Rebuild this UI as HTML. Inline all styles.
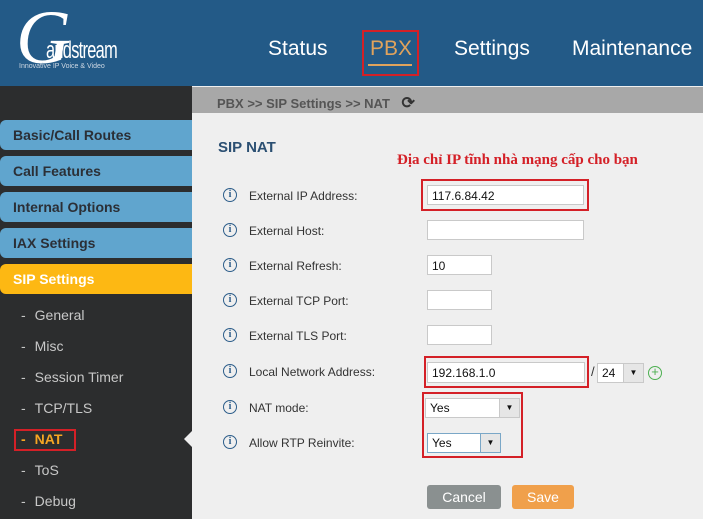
<!DOCTYPE html>
<html><head><meta charset="utf-8"><style>
*{margin:0;padding:0;box-sizing:border-box}
body{width:703px;height:519px;overflow:hidden;font-family:"Liberation Sans",Arial,sans-serif;background:#efefef;position:relative}
.a{position:absolute}
.hdr{left:0;top:0;width:703px;height:86px;background:#235a87}
.nav{color:#fff;font-size:21px;top:37px}
.side{left:0;top:86px;width:192px;height:433px;background:#2c2d2e}
.mi{left:0;width:192px;height:30px;background:#60a5ce;color:#2b2f36;font-weight:bold;font-size:14px;padding:7px 0 0 13px;border-radius:6px 0 0 6px}
.sub{left:21px;color:#c8c8c8;font-size:14px}
.sub span{margin-left:9px}
.lbl{left:249px;font-size:12px;color:#333}
.ic{left:223px;width:14px;height:14px;border:1.5px solid #2c5d8a;border-radius:50%;color:#2c5d8a;font-size:10px;font-weight:bold;text-align:center;line-height:11px;font-family:"Liberation Serif",serif}
.in{background:#fff;border:1px solid #c9c9c9;font-size:12px;padding:3px 4px;color:#111}
.red{border:2.5px solid #d42027}
.sel{background:#fff;border:1px solid #c9c9c9;font-size:12px;padding:2px 4px;color:#111}
.arr{position:absolute;right:0;top:0;bottom:0;width:20px;background:#e6e6e6;border-left:1px solid #c9c9c9;font-size:8px;text-align:center;line-height:17px}
</style></head><body>
<div class="a hdr"></div>
<div class="a" style="left:16px;top:0px;color:#fff;font-family:'Liberation Serif',serif;font-style:italic;font-size:76px;line-height:76px">G</div>
<div class="a" style="left:46px;top:37px;color:#fff;font-size:24px;letter-spacing:-1px;transform:scaleX(.68);transform-origin:left">andstream</div>
<div class="a" style="left:19px;top:63px;color:#cfd9e4;font-size:7px">Innovative IP Voice &amp; Video</div>
<div class="a nav" style="left:268px">Status</div>
<div class="a nav" style="left:370px;color:#e0a35c">PBX</div>
<div class="a" style="left:368px;top:64px;width:44px;height:2px;background:#e0a35c"></div>
<div class="a red" style="left:362px;top:30px;width:57px;height:46px"></div>
<div class="a nav" style="left:454px">Settings</div>
<div class="a nav" style="left:572px">Maintenance</div>
<div class="a side"></div>
<div class="a" style="left:192px;top:87px;width:511px;height:26px;background:#a8a8a8;color:#555;font-weight:bold;font-size:13px;padding:6px 0 0 25px">PBX &gt;&gt; SIP Settings &gt;&gt; NAT <span style="margin-left:8px;font-size:16px;color:#333">⟳</span></div>
<div class="a mi" style="top:120px">Basic/Call Routes</div>
<div class="a mi" style="top:156px">Call Features</div>
<div class="a mi" style="top:192px">Internal Options</div>
<div class="a mi" style="top:228px">IAX Settings</div>
<div class="a mi" style="top:264px;background:#fdb813;color:#fff">SIP Settings</div>
<div class="a sub" style="top:307px">-<span>General</span></div>
<div class="a sub" style="top:338px">-<span>Misc</span></div>
<div class="a sub" style="top:369px">-<span>Session Timer</span></div>
<div class="a sub" style="top:400px">-<span>TCP/TLS</span></div>
<div class="a sub" style="top:431px;color:#f6a623;font-weight:bold">-<span>NAT</span></div>
<div class="a red" style="left:14px;top:429px;width:62px;height:22px"></div>
<div class="a sub" style="top:462px">-<span>ToS</span></div>
<div class="a sub" style="top:493px">-<span>Debug</span></div>
<div class="a" style="left:184px;top:431px;width:0;height:0;border-top:8px solid transparent;border-bottom:8px solid transparent;border-right:8px solid #efefef"></div>
<div class="a" style="left:218px;top:139px;color:#2b4f72;font-weight:bold;font-size:15px">SIP NAT</div>
<div class="a" style="left:397px;top:152px;color:#d42027;font-weight:bold;font-size:15px;font-family:'Liberation Serif',serif">Địa chỉ IP tĩnh nhà mạng cấp cho bạn</div>
<div class="a ic" style="top:188px">i</div><div class="a lbl" style="top:189px">External IP Address:</div>
<div class="a ic" style="top:223px">i</div><div class="a lbl" style="top:224px">External Host:</div>
<div class="a ic" style="top:258px">i</div><div class="a lbl" style="top:259px">External Refresh:</div>
<div class="a ic" style="top:293px">i</div><div class="a lbl" style="top:294px">External TCP Port:</div>
<div class="a ic" style="top:328px">i</div><div class="a lbl" style="top:329px">External TLS Port:</div>
<div class="a ic" style="top:364px">i</div><div class="a lbl" style="top:365px">Local Network Address:</div>
<div class="a ic" style="top:400px">i</div><div class="a lbl" style="top:401px">NAT mode:</div>
<div class="a ic" style="top:435px">i</div><div class="a lbl" style="top:436px">Allow RTP Reinvite:</div>
<div class="a in" style="left:427px;top:185px;width:157px;height:20px">117.6.84.42</div>
<div class="a red" style="left:421px;top:179px;width:168px;height:32px"></div>
<div class="a in" style="left:427px;top:220px;width:157px;height:20px"></div>
<div class="a in" style="left:427px;top:255px;width:65px;height:20px">10</div>
<div class="a in" style="left:427px;top:290px;width:65px;height:20px"></div>
<div class="a in" style="left:427px;top:325px;width:65px;height:20px"></div>
<div class="a in" style="left:427px;top:362px;width:158px;height:21px">192.168.1.0</div>
<div class="a red" style="left:424px;top:356px;width:165px;height:32px"></div>
<div class="a" style="left:591px;top:364px;font-size:13px;color:#333">/</div>
<div class="a sel" style="left:597px;top:363px;width:47px;height:20px">24<div class="arr">▼</div></div>
<div class="a" style="left:648px;top:366px;width:14px;height:14px;border:1.5px solid #4caf50;border-radius:50%;color:#4caf50;font-size:13px;line-height:10px;text-align:center">+</div>
<div class="a sel" style="left:425px;top:398px;width:95px;height:20px">Yes<div class="arr">▼</div></div>
<div class="a sel" style="left:427px;top:433px;width:74px;height:20px;border-color:#7aa7c7">Yes<div class="arr" style="border-left-color:#7aa7c7">▼</div></div>
<div class="a red" style="left:422px;top:392px;width:101px;height:66px"></div>
<div class="a" style="left:427px;top:485px;width:74px;height:24px;background:#8a9090;color:#fff;font-size:14px;text-align:center;line-height:24px;border-radius:3px">Cancel</div>
<div class="a" style="left:512px;top:485px;width:62px;height:24px;background:#f0a04b;color:#fff;font-size:14px;text-align:center;line-height:24px;border-radius:3px">Save</div>
</body></html>
